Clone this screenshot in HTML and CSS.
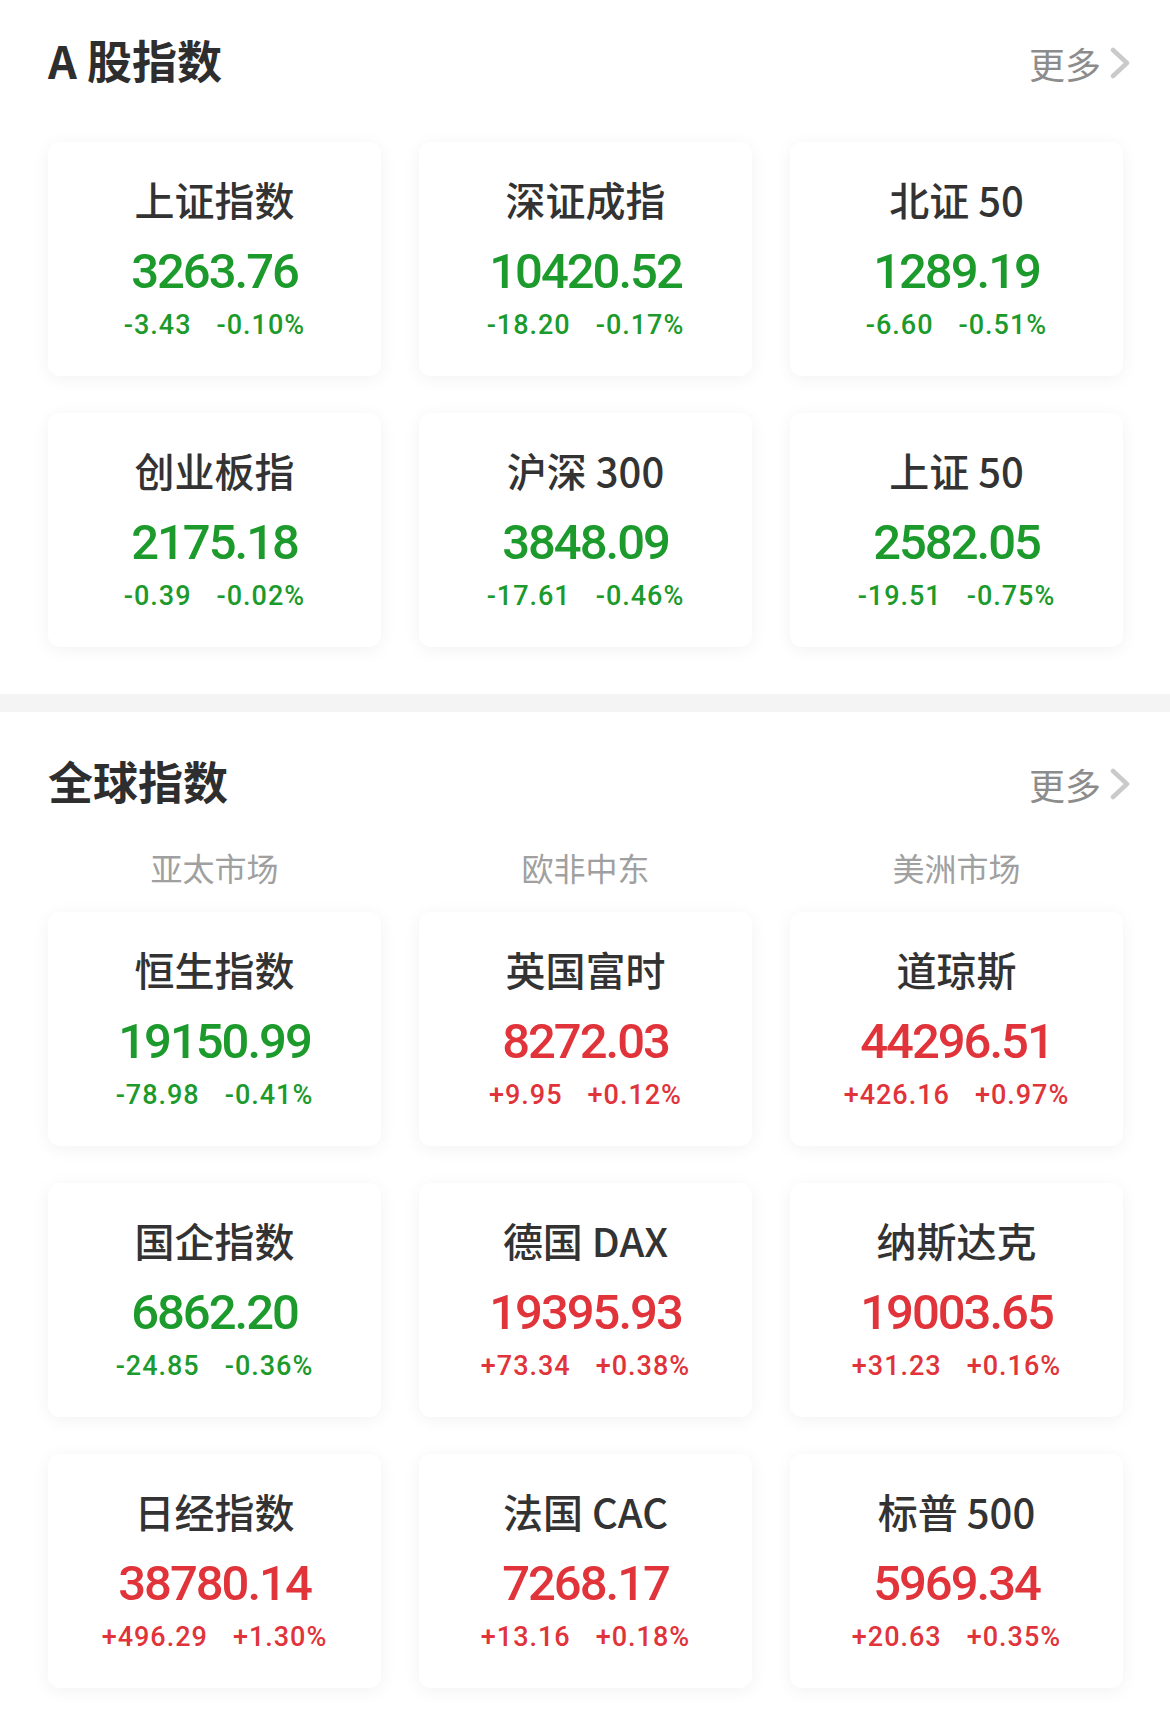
FILE: index.html
```html
<!DOCTYPE html>
<html lang="zh-CN">
<head>
    <meta charset="UTF-8">
    <meta name="viewport" content="width=device-width, initial-scale=1.0">
    <title>指数行情</title>
    <link rel="stylesheet" href="styles.css">
</head>
<body>
    <div class="section section-a">
        <div class="head">
            <h2>A 股指数</h2>
            <a class="more" href="#">更多
                <svg class="chev" width="22" height="32" viewBox="0 0 22 32"><polyline points="4,3 18,16 4,29" fill="none" stroke="#cacaca" stroke-width="4.5" stroke-linecap="round" stroke-linejoin="round"/></svg>
            </a>
        </div>
        <div class="grid">
            <div class="card down">
                <div class="name">上证指数</div>
                <div class="value">3263.76</div>
                <div class="change"><span>-3.43</span><span>-0.10%</span></div>
            </div>
            <div class="card down">
                <div class="name">深证成指</div>
                <div class="value">10420.52</div>
                <div class="change"><span>-18.20</span><span>-0.17%</span></div>
            </div>
            <div class="card down">
                <div class="name">北证 50</div>
                <div class="value">1289.19</div>
                <div class="change"><span>-6.60</span><span>-0.51%</span></div>
            </div>
            <div class="card down">
                <div class="name">创业板指</div>
                <div class="value">2175.18</div>
                <div class="change"><span>-0.39</span><span>-0.02%</span></div>
            </div>
            <div class="card down">
                <div class="name">沪深 300</div>
                <div class="value">3848.09</div>
                <div class="change"><span>-17.61</span><span>-0.46%</span></div>
            </div>
            <div class="card down">
                <div class="name">上证 50</div>
                <div class="value">2582.05</div>
                <div class="change"><span>-19.51</span><span>-0.75%</span></div>
            </div>
        </div>
    </div>

    <div class="divider"></div>

    <div class="section section-g">
        <div class="head">
            <h2>全球指数</h2>
            <a class="more" href="#">更多
                <svg class="chev" width="22" height="32" viewBox="0 0 22 32"><polyline points="4,3 18,16 4,29" fill="none" stroke="#cacaca" stroke-width="4.5" stroke-linecap="round" stroke-linejoin="round"/></svg>
            </a>
        </div>
        <div class="tabs">
            <div>亚太市场</div>
            <div>欧非中东</div>
            <div>美洲市场</div>
        </div>
        <div class="grid">
            <div class="card down">
                <div class="name">恒生指数</div>
                <div class="value">19150.99</div>
                <div class="change"><span>-78.98</span><span>-0.41%</span></div>
            </div>
            <div class="card up">
                <div class="name">英国富时</div>
                <div class="value">8272.03</div>
                <div class="change"><span>+9.95</span><span>+0.12%</span></div>
            </div>
            <div class="card up">
                <div class="name">道琼斯</div>
                <div class="value">44296.51</div>
                <div class="change"><span>+426.16</span><span>+0.97%</span></div>
            </div>
            <div class="card down">
                <div class="name">国企指数</div>
                <div class="value">6862.20</div>
                <div class="change"><span>-24.85</span><span>-0.36%</span></div>
            </div>
            <div class="card up">
                <div class="name">德国 DAX</div>
                <div class="value">19395.93</div>
                <div class="change"><span>+73.34</span><span>+0.38%</span></div>
            </div>
            <div class="card up">
                <div class="name">纳斯达克</div>
                <div class="value">19003.65</div>
                <div class="change"><span>+31.23</span><span>+0.16%</span></div>
            </div>
            <div class="card up">
                <div class="name">日经指数</div>
                <div class="value">38780.14</div>
                <div class="change"><span>+496.29</span><span>+1.30%</span></div>
            </div>
            <div class="card up">
                <div class="name">法国 CAC</div>
                <div class="value">7268.17</div>
                <div class="change"><span>+13.16</span><span>+0.18%</span></div>
            </div>
            <div class="card up">
                <div class="name">标普 500</div>
                <div class="value">5969.34</div>
                <div class="change"><span>+20.63</span><span>+0.35%</span></div>
            </div>
        </div>
    </div>
</body>
</html>
```

FILE: styles.css
```css
body {
    margin: 0;
    padding: 0;
    background: #fff;
    font-family: "Noto Sans CJK SC", "Noto Sans", sans-serif;
    color: #333;
}
.section {
    padding: 37px 47px 47px 48px;
}
.section-g {
    padding-top: 46px;
    padding-bottom: 30px;
}
.head {
    display: flex;
    justify-content: space-between;
    align-items: baseline;
    height: 45px;
}
.head h2 {
    margin: 0;
    font-size: 45px;
    line-height: 45px;
    font-weight: 700;
    color: #2e2e2e;
}
.section-a .head {
    margin-bottom: 60px;
}
.section-g .head {
    margin-bottom: 48px;
}
.more {
    display: flex;
    align-items: center;
    gap: 8px;
    font-size: 36px;
    line-height: 45px;
    color: #8c8c8c;
    text-decoration: none;
    margin-right: -8px;
}
.chev {
    display: block;
    margin-top: -2px;
}
.divider {
    height: 18px;
    background: #f4f4f4;
}
.tabs {
    display: grid;
    grid-template-columns: repeat(3, 1fr);
    column-gap: 38px;
    margin-bottom: 29px;
}
.tabs div {
    text-align: center;
    font-size: 32px;
    line-height: 32px;
    color: #a0a0a0;
}
.grid {
    display: grid;
    grid-template-columns: repeat(3, 1fr);
    column-gap: 38px;
    row-gap: 37px;
}
.card {
    background: #fff;
    border-radius: 12px;
    box-shadow: 0 3px 18px rgba(0, 0, 0, 0.055);
    padding: 37px 0;
    text-align: center;
}
.name {
    font-size: 40px;
    line-height: 40px;
    font-weight: 500;
    color: #333;
}
.value {
    margin-top: 28px;
    font-family: Roboto, "Liberation Sans", sans-serif;
    font-size: 49px;
    line-height: 49px;
    font-weight: 500;
    letter-spacing: -2px;
}
.change {
    margin-top: 16px;
    display: flex;
    justify-content: center;
    gap: 25px;
    font-family: Roboto, "Liberation Sans", sans-serif;
    font-size: 27px;
    line-height: 27px;
    font-weight: 500;
    letter-spacing: 1px;
}
.down .value, .down .change {
    color: #1c9a2c;
}
.up .value, .up .change {
    color: #e0333a;
}
```
